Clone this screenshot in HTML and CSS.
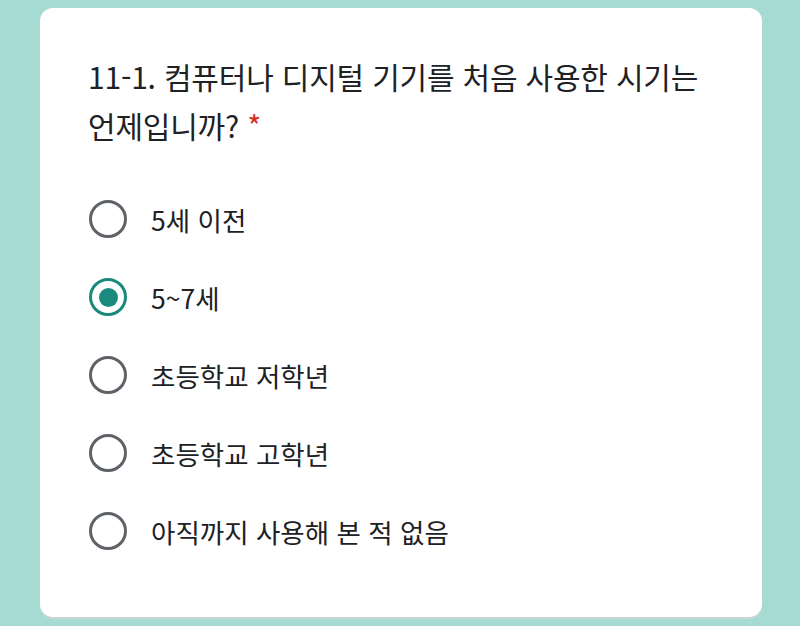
FILE: index.html
```html
<!DOCTYPE html>
<html lang="ko">
<head>
<meta charset="utf-8">
<link rel="stylesheet" href="styles.css">
</head>
<body>
<div class="card">
  <div class="title">11-1. 컴퓨터나 디지털 기기를 처음 사용한 시기는<br>언제입니까? <span class="req">*</span></div>
  <div class="options">
    <div class="opt"><span class="radio"></span><span class="label">5세 이전</span></div>
    <div class="opt"><span class="radio on"></span><span class="label">5~7세</span></div>
    <div class="opt"><span class="radio"></span><span class="label">초등학교 저학년</span></div>
    <div class="opt"><span class="radio"></span><span class="label">초등학교 고학년</span></div>
    <div class="opt"><span class="radio"></span><span class="label">아직까지 사용해 본 적 없음</span></div>
  </div>
</div>
</body>
</html>
```
FILE: styles.css
```css
html, body {
  margin: 0;
  padding: 0;
  background: #a6dbd4;
  width: 800px;
  height: 626px;
  overflow: hidden;
  font-family: "Noto Sans CJK KR", "Noto Sans", sans-serif;
  color: #202124;
}
.card {
  margin: 8px 38px 0 40px;
  height: 609px;
  box-sizing: border-box;
  background: #fff;
  border-radius: 13px;
  box-shadow: 0 2px 1px #c9d6d3;
  padding: 44px 20px 0 48px;
}
.title {
  font-size: 30px;
  line-height: 49px;
  letter-spacing: -0.2px;
  white-space: nowrap;
}
.req { color: #d93025; }
.options {
  margin-top: 50px;
  display: flex;
  flex-direction: column;
  gap: 40px;
}
.opt {
  display: flex;
  align-items: center;
  height: 38px;
}
.radio {
  width: 38px;
  height: 38px;
  box-sizing: border-box;
  border: 3.5px solid #5f6368;
  border-radius: 50%;
  margin-left: 1px;
  position: relative;
  flex: none;
}
.radio.on {
  border-color: #1a8a7e;
}
.radio.on::after {
  content: "";
  position: absolute;
  left: 50%;
  top: 50%;
  width: 19px;
  height: 19px;
  margin: -9.5px 0 0 -9.5px;
  border-radius: 50%;
  background: #1a8a7e;
}
.label {
  margin-left: 24px;
  font-size: 26.5px;
}
```
